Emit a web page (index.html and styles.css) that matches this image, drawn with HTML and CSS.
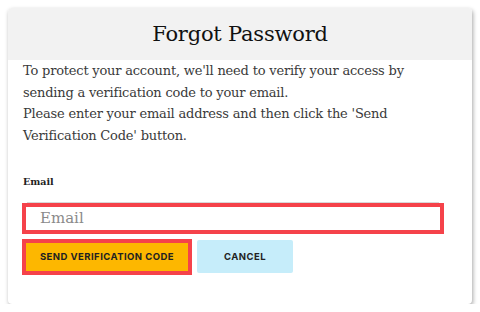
FILE: index.html
```html
<!DOCTYPE html>
<html>
<head>
<meta charset="utf-8">
<link rel="stylesheet" href="styles.css">
</head>
<body>
<div class="card">
  <div class="head"><h1 class="title">Forgot Password</h1></div>
  <div class="content">
    <p class="intro">To protect your account, we'll need to verify your access by sending a verification code to your email.<br>Please enter your email address and then click the 'Send Verification Code' button.</p>
    <div class="label">Email</div>
    <div class="rule"></div>
    <div class="input-box"><span class="placeholder">Email</span></div>
    <div class="actions">
      <div class="send-wrap"><button class="btn send">SEND VERIFICATION CODE</button></div>
      <button class="btn cancel">CANCEL</button>
    </div>
  </div>
</div>
</body>
</html>
```
FILE: styles.css
```css
html, body {
  margin: 0;
  padding: 0;
  background: #ffffff;
}
body {
  font-family: "DejaVu Serif", serif;
  color: #333333;
}
.card {
  margin: 8px 0 0 8px;
  width: 464px;
  height: 296px;
  background: #ffffff;
  border-radius: 4px;
  box-shadow: 1px 2px 4px rgba(0, 0, 0, 0.35);
  overflow: hidden;
}
.head {
  height: 52px;
  background: #f2f2f2;
  display: flex;
  align-items: center;
  justify-content: center;
}
.title {
  margin: 0;
  font-family: "DejaVu Serif", serif;
  font-weight: normal;
  font-size: 21px;
  letter-spacing: -0.2px;
  color: #111111;
}
.content {
  padding: 0 14px;
}
.intro {
  margin: 0;
  padding-left: 1px;
  max-width: 405px;
  font-size: 13px;
  line-height: 21.7px;
  color: #3a3a3a;
  letter-spacing: -0.2px;
}
.label {
  margin-top: 28px;
  padding-left: 1px;
  font-size: 9.5px;
  line-height: 14px;
  font-weight: bold;
  color: #222222;
}
.rule {
  margin: 13px 0 0 5px;
  width: 412px;
  height: 1px;
  background: #d8d8d8;
}
.input-box {
  height: 23px;
  border: 4px solid #f5424a;
  display: flex;
  align-items: center;
  padding-left: 14px;
  width: 400px;
}
.placeholder {
  font-size: 15px;
  color: #8a8a8a;
}
.actions {
  margin-top: 5px;
  display: flex;
  align-items: center;
}
.send-wrap {
  border: 4px solid #f5424a;
  width: 162px;
  height: 28px;
}
.btn {
  border: none;
  margin: 0;
  padding: 0;
  font-family: "Inter", sans-serif;
  font-weight: 700;
  font-size: 9.5px;
  letter-spacing: 0.45px;
  color: #222222;
  cursor: pointer;
}
.send {
  width: 100%;
  height: 100%;
  background: #fdb700;
}
.cancel {
  margin-left: 5px;
  width: 96px;
  height: 33px;
  background: #c6edfa;
  border-radius: 2px;
}
```
